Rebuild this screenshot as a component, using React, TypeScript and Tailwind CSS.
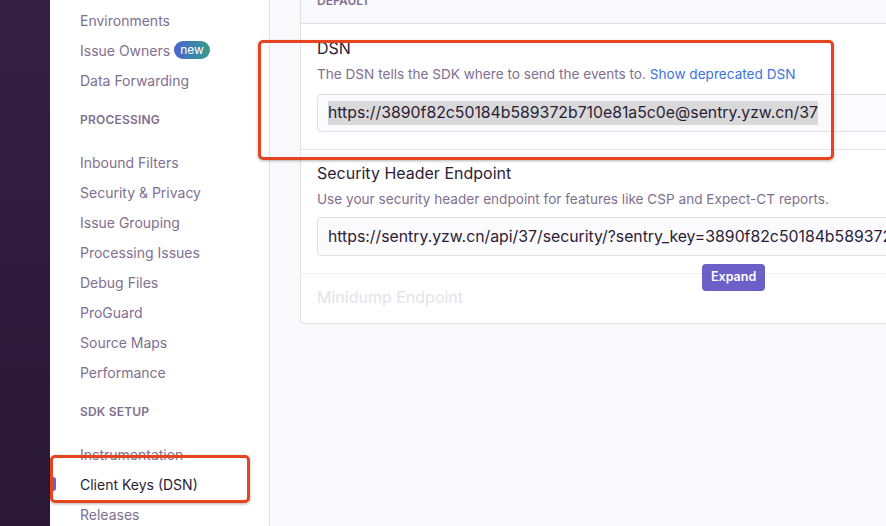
import React from "react";

const font = { fontFamily: "Inter, 'Noto Sans', sans-serif" };

type NavItem = { label: string; heading?: boolean; badge?: string; active?: boolean };

const navItems: NavItem[] = [
  { label: "Environments" },
  { label: "Issue Owners", badge: "new" },
  { label: "Data Forwarding" },
  { label: "Processing", heading: true },
  { label: "Inbound Filters" },
  { label: "Security & Privacy" },
  { label: "Issue Grouping" },
  { label: "Processing Issues" },
  { label: "Debug Files" },
  { label: "ProGuard" },
  { label: "Source Maps" },
  { label: "Performance" },
  { label: "SDK Setup", heading: true },
  { label: "Instrumentation" },
  { label: "Client Keys (DSN)", active: true },
  { label: "Releases" },
];

function Sidebar() {
  return (
    <aside className="relative w-[220px] shrink-0 bg-white border-r border-[#e2dee6] pt-[5px]">
      {navItems.map((item, i) =>
        item.heading ? (
          <div
            key={i}
            className="h-[20px] mt-[15px] mb-[17px] pl-[30px] flex items-center text-[12px] font-semibold uppercase text-[#80708f] tracking-[0.2px]"
          >
            {item.label}
          </div>
        ) : (
          <div key={i} className="relative h-[30px] pl-[30px] flex items-center text-[14px]">
            {item.active && <span className="absolute left-[3px] top-[8px] w-[3px] h-[14px] rounded-r bg-[#6c5fc7]" />}
            <span className={item.active ? "text-[#2b1d38]" : "text-[#80708f]"}>{item.label}</span>
            {item.badge && (
              <span className="ml-[4px] h-[18px] px-[6px] rounded-full text-[12px] leading-[18px] text-white bg-gradient-to-r from-[#4a62d0] to-[#3a9a87]">
                {item.badge}
              </span>
            )}
          </div>
        )
      )}
    </aside>
  );
}

export default function App() {
  return (
    <div className="relative flex w-[886px] h-[526px] overflow-hidden bg-[#faf9fb]" style={font}>
      <div className="w-[50px] shrink-0 bg-gradient-to-b from-[#341f40] to-[#2b1837]" />
      <Sidebar />
      <main className="flex-1 overflow-hidden pl-[30px]">
        <div className="relative w-[720px] mt-[-17px] bg-white border border-[#e2dee6] border-r-0 rounded-l-[4px]">
          <div className="h-[40px] pt-[8px] px-[16px] bg-[#faf9fb] border-b border-[#e2dee6] text-[12px] font-semibold uppercase text-[#80708f]">
            Default
          </div>
          <div className="px-[16px] pt-[14px] pb-[17px] border-b border-[#e7e3eb]">
            <div className="text-[16px] leading-[20px] text-[#2b1d38]">DSN</div>
            <div className="mt-[6px] text-[13.6px] leading-[20px] text-[#80708f]">
              The DSN tells the SDK where to send the events to.{" "}
              <span className="text-[#3d74db]">Show deprecated DSN</span>
            </div>
            <div className="mt-[10px] h-[38px] flex items-center pl-[10px] border border-[#e2dee6] rounded-[4px] bg-[#fbfafc] text-[15.8px] text-[#2b1d38] whitespace-nowrap overflow-hidden">
              <span className="bg-[#d9d9d9]">https://3890f82c50184b589372b710e81a5c0e@sentry.yzw.cn/37</span>
            </div>
          </div>
          <div className="px-[16px] pt-[13px] pb-[17px] border-b border-[#f0eef3]">
            <div className="text-[16px] leading-[20px] text-[#2b1d38]">Security Header Endpoint</div>
            <div className="mt-[6px] text-[13.6px] leading-[20px] text-[#80708f]">
              Use your security header endpoint for features like CSP and Expect-CT reports.
            </div>
            <div className="mt-[8px] h-[39px] flex items-center pl-[10px] border border-[#e2dee6] rounded-[4px] bg-[#fbfafc] text-[15.8px] text-[#2b1d38] whitespace-nowrap overflow-hidden">
              https://sentry.yzw.cn/api/37/security/?sentry_key=3890f82c50184b589372b710e81a5c0e
            </div>
          </div>
          <div className="h-[49px] px-[16px] pt-[13px] text-[16px] leading-[20px] text-[#e6e2ea]">Minidump Endpoint</div>
          <button className="absolute left-[401px] top-[280px] h-[27px] px-[9px] rounded-[4px] bg-[#6c5fc7] text-white text-[12.5px] font-semibold">
            Expand
          </button>
        </div>
      </main>
      {/* annotation boxes */}
      <div className="absolute left-[258px] top-[40px] w-[576px] h-[120px] border-[3px] border-[#e4451f] rounded-[5px] shadow-[0_1px_3px_rgba(0,0,0,0.3)] pointer-events-none" />
      <div className="absolute left-[50px] top-[455px] w-[200px] h-[48px] border-[3px] border-[#e4451f] rounded-[5px] shadow-[0_1px_3px_rgba(0,0,0,0.3)] pointer-events-none" />
    </div>
  );
}
